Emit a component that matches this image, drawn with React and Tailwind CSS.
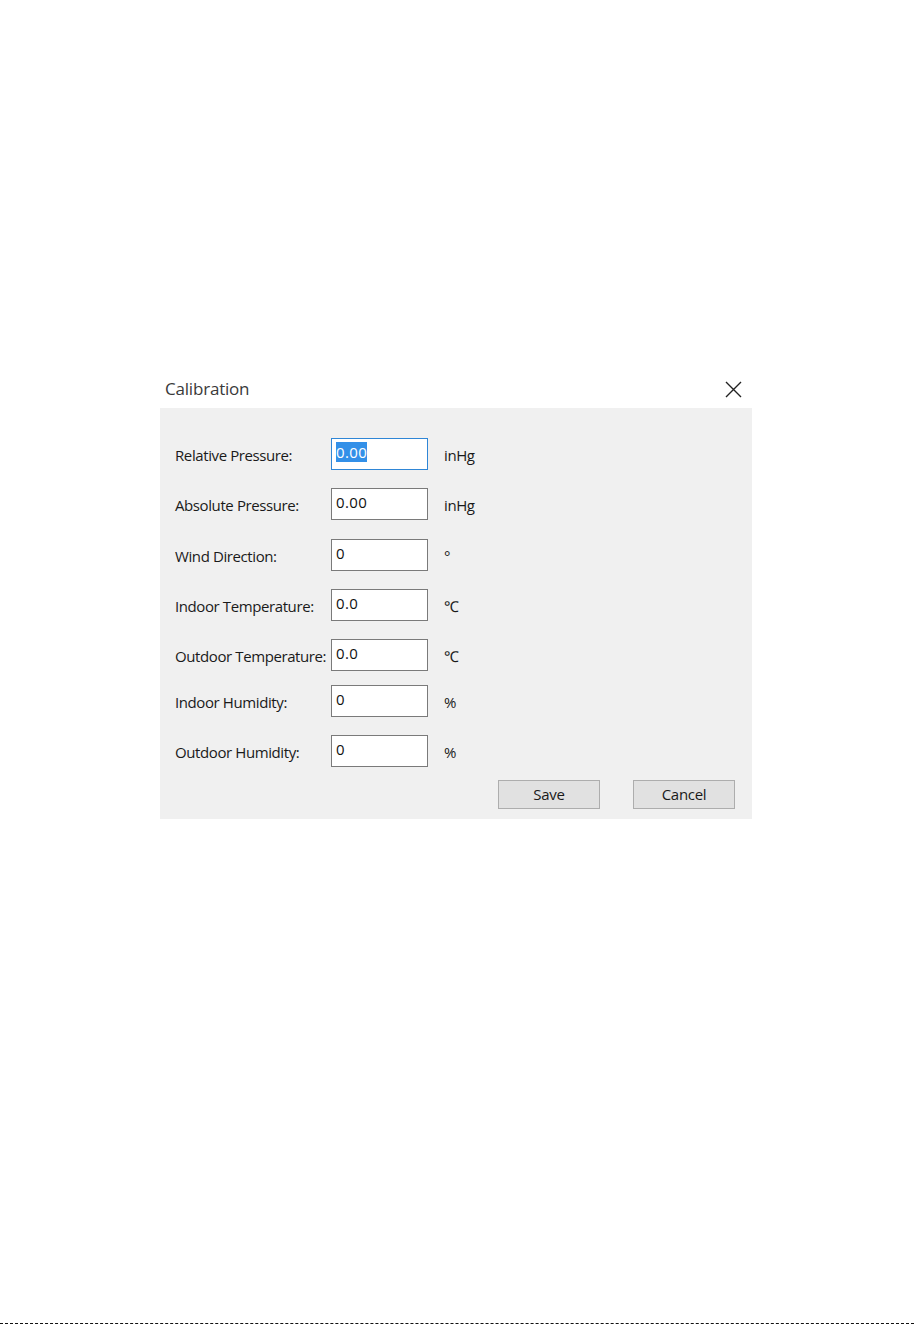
import React from "react";

const rows = [
  { label: "Relative Pressure:", value: "0.00", unit: "inHg", top: "mt-0", active: true },
  { label: "Absolute Pressure:", value: "0.00", unit: "inHg", top: "mt-[18px]" },
  { label: "Wind Direction:", value: "0", unit: "°", top: "mt-[19px]" },
  { label: "Indoor Temperature:", value: "0.0", unit: "℃", top: "mt-[18px]" },
  { label: "Outdoor Temperature:", value: "0.0", unit: "℃", top: "mt-[18px]" },
  { label: "Indoor Humidity:", value: "0", unit: "%", top: "mt-[14px]" },
  { label: "Outdoor Humidity:", value: "0", unit: "%", top: "mt-[18px]" },
];

function Field({ label, value, unit, top, active }) {
  return (
    <div className={`flex items-center ${top}`}>
      <div className="w-[156px] whitespace-nowrap pt-[3px] text-[15px] tracking-[-0.4px] text-[#1a1a1a]">{label}</div>
      <div
        className={[
          "h-[32px] w-[97px] bg-white px-[4px] pt-[3px] text-[15px] leading-[20px] tracking-[0.4px] text-[#111]",
          active ? "border border-[#2f86d6]" : "border border-[#7a7a7a]",
        ].join(" ")}
      >
        {active ? <span className="bg-[#3390e8] text-white">{value}</span> : value}
      </div>
      <div className="ml-[16px] pt-[3px] text-[15px] tracking-[-0.4px] text-[#1a1a1a]">{unit}</div>
    </div>
  );
}

export default function App() {
  return (
    <div className="relative min-h-[1324px] bg-white font-['Open_Sans','Liberation_Sans',Arial,sans-serif]">
      <div className="pt-[370px] pl-[160px]">
        <section className="w-[592px]">
          {/* Title bar */}
          <div className="flex h-[38px] items-center justify-between pl-[5px] pr-[10px]">
            <span className="text-[17px] tracking-[-0.2px] text-[#3a3a3a]">Calibration</span>
            <svg width="17" height="17" viewBox="0 0 17 17" aria-hidden="true">
              <path d="M1 1L16 16M16 1L1 16" stroke="#222" strokeWidth="1.4" />
            </svg>
          </div>

          {/* Body */}
          <div className="bg-[#f0f0f0] pl-[15px] pr-[17px] pb-[10px] pt-[30px]">
            {rows.map((r) => (
              <Field key={r.label} {...r} />
            ))}

            <div className="mt-[13px] flex justify-end gap-[33px]">
              <button
                type="button"
                className="h-[29px] w-[102px] border border-[#adadad] bg-[#e1e1e1] text-[15px] tracking-[-0.3px] text-[#1a1a1a]"
              >
                Save
              </button>
              <button
                type="button"
                className="h-[29px] w-[102px] border border-[#adadad] bg-[#e1e1e1] text-[15px] tracking-[-0.3px] text-[#1a1a1a]"
              >
                Cancel
              </button>
            </div>
          </div>
        </section>
      </div>
      <div className="absolute bottom-0 left-0 h-px w-full border-b border-dashed border-[#111]" />
    </div>
  );
}
